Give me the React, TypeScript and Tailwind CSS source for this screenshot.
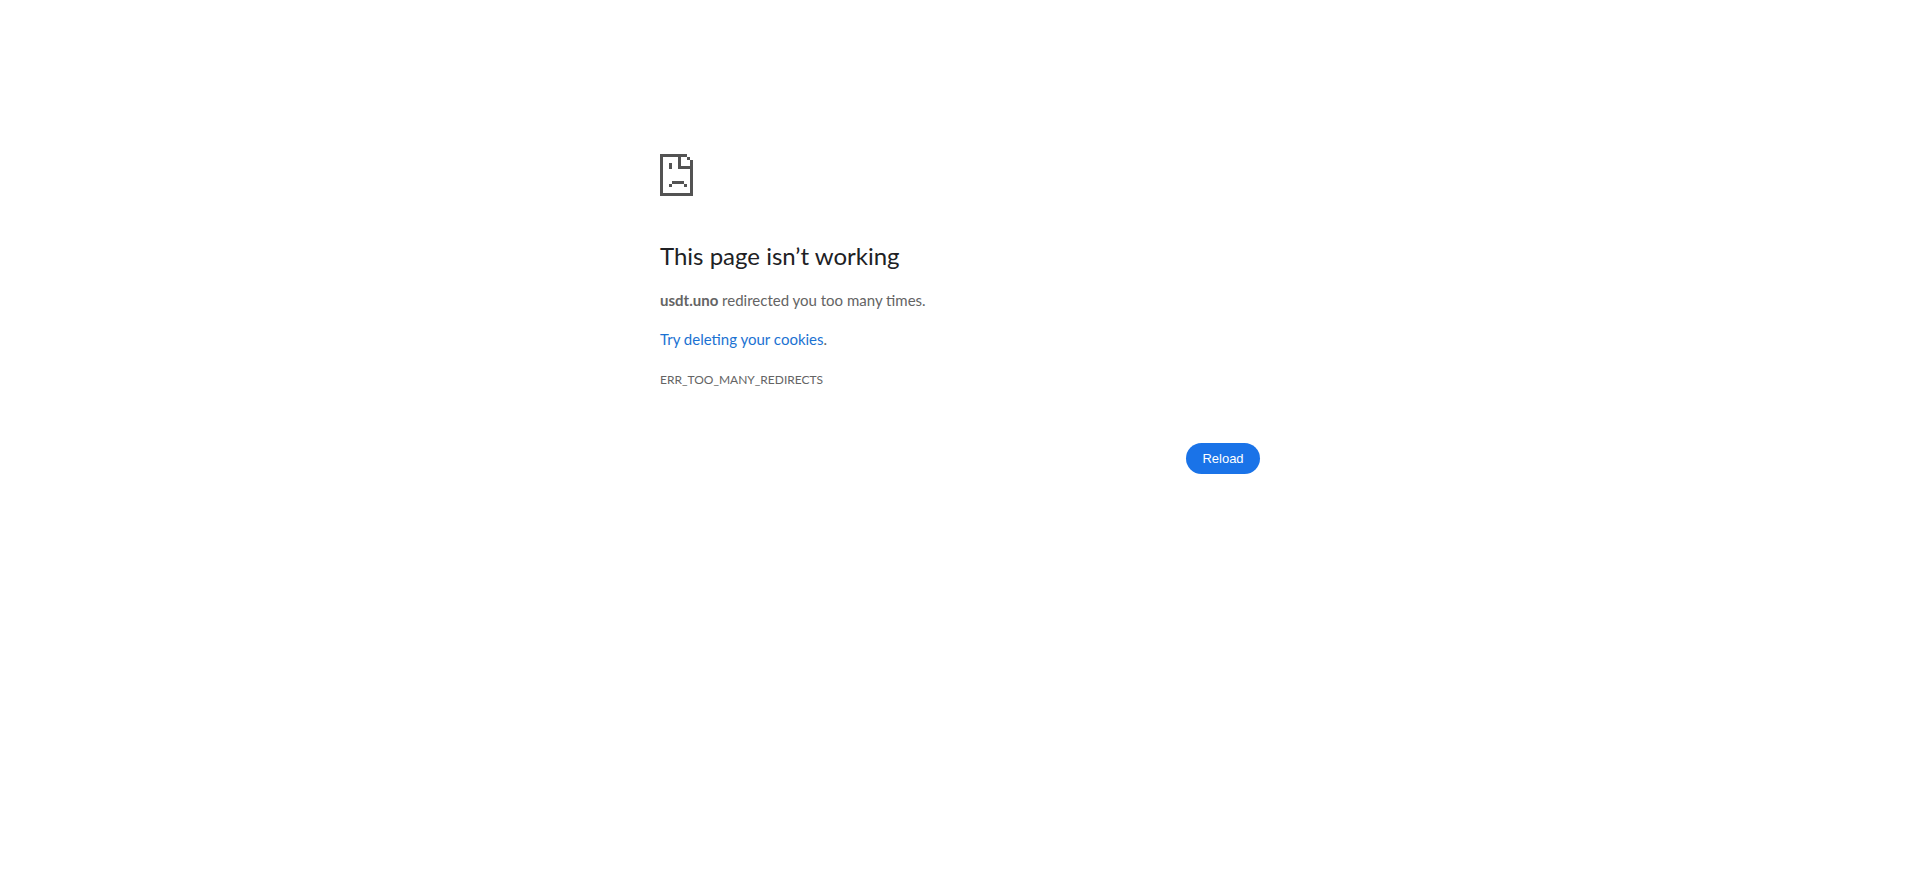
function SadPageIcon() {
  return (
    <svg
      className="h-[42px] w-[33px] text-[#535353]"
      viewBox="0 0 11 14"
      fill="currentColor"
      shapeRendering="crispEdges"
      aria-hidden="true"
    >
      {/* sheet outline and folded corner */}
      <path d="M0 0h9v1H1v12h9V5H6V1h1v3h3V2h1v12H0zM9 1h1v1H9z" />
      {/* eye and mouth */}
      <path d="M3 3h1v2H3zM4 9h4v1H4zM3 10h1v1H3zM8 10h1v1H8z" />
    </svg>
  );
}

export default function App() {
  return (
    <main className="mx-auto mt-[154px] max-w-[600px] font-['Lato',sans-serif] text-[15px] leading-6 text-[#646464]">
      <SadPageIcon />

      <h1 className="mt-[45px] text-2xl leading-[30px] text-[#202124]">This page isn’t working</h1>
      <div className="my-[17px] space-y-[15px]">
        <p>
          <strong className="font-bold">usdt.uno</strong> redirected you too many times.
        </p>
        <p>
          <a href="#cookies" className="text-[#1b72d2]">
            Try deleting your cookies
          </a>
          .
        </p>
      </div>
      <p className="text-xs leading-6">ERR_TOO_MANY_REDIRECTS</p>

      <div className="mt-[51px] flex justify-end">
        <button
          type="button"
          className="min-w-[74px] rounded-full bg-[#1a73e8] px-4 py-2 font-['Liberation_Sans',sans-serif] text-[13px] leading-[15px] text-white"
          onClick={() => window.location.reload()}
        >
          Reload
        </button>
      </div>
    </main>
  );
}
